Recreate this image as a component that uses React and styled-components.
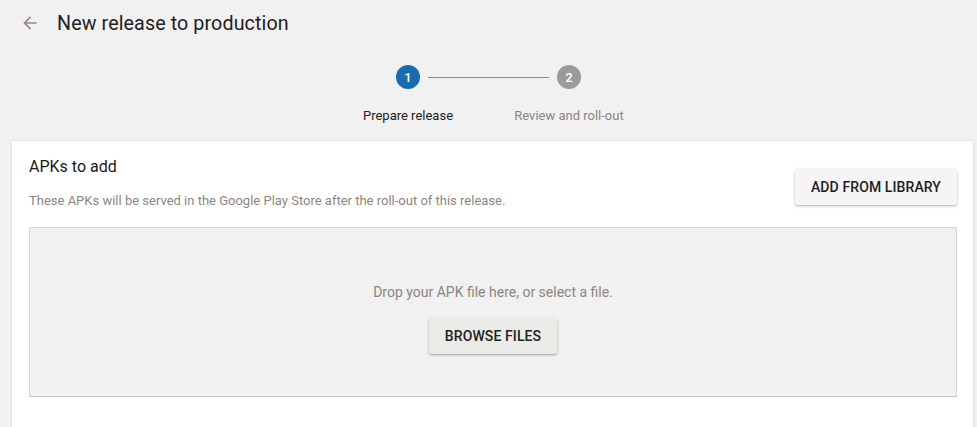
import React from "react";
import styled, { createGlobalStyle } from "styled-components";

const Global = createGlobalStyle`
  html, body { margin: 0; padding: 0; background: #f1f1f1; }
  body { font-family: Roboto, "Noto Sans", Arial, sans-serif; overflow: hidden; }
  * { box-sizing: border-box; }
`;

const Page = styled.div`
  width: 977px;
  height: 427px;
  background: #f1f1f1;
  display: flex;
  flex-direction: column;
`;

const Header = styled.div`
  display: flex;
  align-items: center;
  height: 46px;
  padding-left: 19px;
  gap: 16px;
`;

const BackButton = styled.button`
  width: 22px;
  height: 22px;
  border: none;
  background: none;
  padding: 0;
  display: flex;
  align-items: center;
  justify-content: center;
  cursor: pointer;
`;

const Title = styled.h1`
  margin: 0;
  font-size: 19.7px;
  font-weight: 400;
  color: #212121;
  letter-spacing: 0.1px;
`;

const Stepper = styled.div`
  display: flex;
  justify-content: center;
  padding-top: 19px;
`;

const Step = styled.div`
  width: 161px;
  display: flex;
  flex-direction: column;
  align-items: center;
  position: relative;
`;

const Circle = styled.div`
  width: 24px;
  height: 24px;
  border-radius: 50%;
  background: ${(p) => (p.$active ? "#1a6bb0" : "#9b9b9b")};
  color: #fff;
  font-size: 13px;
  font-weight: 500;
  display: flex;
  align-items: center;
  justify-content: center;
  z-index: 1;
`;

const Connector = styled.div`
  position: absolute;
  top: 12px;
  left: calc(50% + 20px);
  width: 121px;
  height: 1px;
  background: #8a8a8a;
`;

const StepLabel = styled.div`
  margin-top: 19px;
  font-size: 13px;
  color: ${(p) => (p.$active ? "#212121" : "#8d8580")};
  white-space: nowrap;
`;

const Card = styled.div`
  margin: 18px 4px 0 12px;
  flex: 1;
  background: #fff;
  box-shadow: 0 0 1px rgba(0, 0, 0, 0.2), 0 1px 2px rgba(0, 0, 0, 0.08);
  padding: 16px 16px 0 17px;
  display: flex;
  flex-direction: column;
`;

const CardTop = styled.div`
  display: flex;
  justify-content: space-between;
  align-items: flex-start;
`;

const CardText = styled.div`
  display: flex;
  flex-direction: column;
`;

const CardTitle = styled.h2`
  margin: 0;
  font-size: 16px;
  font-weight: 400;
  color: #1a1a1a;
  line-height: 20px;
`;

const CardSub = styled.p`
  margin: 16px 0 0;
  font-size: 13px;
  color: #8d8580;
  line-height: 16px;
`;

const RaisedButton = styled.button`
  font-family: Roboto, "Noto Sans", Arial, sans-serif;
  font-size: 14px;
  font-weight: 500;
  color: #212121;
  background: ${(p) => (p.$onGrey ? "#ebebe7" : "#f5f5f5")};
  border: none;
  border-radius: 2px;
  height: 36px;
  padding: 0 16px;
  margin-top: ${(p) => p.$mt || 0}px;
  box-shadow: 0 1px 3px rgba(0, 0, 0, 0.25), 0 1px 1px rgba(0, 0, 0, 0.1);
  cursor: pointer;
  letter-spacing: 0.1px;
`;

const DropZone = styled.div`
  margin-top: 18px;
  height: 170px;
  background: #f1f1f1;
  border: 1px solid #d4d4d4;
  border-bottom-color: #c8c8c0;
  display: flex;
  flex-direction: column;
  align-items: center;
  padding-top: 55px;
`;

const DropText = styled.div`
  font-size: 14px;
  color: #8d8580;
  line-height: 18px;
`;

const BackArrow = () => (
  <svg width="20" height="20" viewBox="0 0 24 24">
    <path d="M20 11H7.83l5.59-5.59L12 4l-8 8 8 8 1.41-1.41L7.83 13H20v-2z" fill="#9b8a84" />
  </svg>
);

export default function App() {
  return (
    <>
      <Global />
      <Page>
        <Header>
          <BackButton aria-label="Back">
            <BackArrow />
          </BackButton>
          <Title>New release to production</Title>
        </Header>
        <Stepper>
          <Step>
            <Circle $active>1</Circle>
            <Connector />
            <StepLabel $active>Prepare release</StepLabel>
          </Step>
          <Step>
            <Circle>2</Circle>
            <StepLabel>Review and roll-out</StepLabel>
          </Step>
        </Stepper>
        <Card>
          <CardTop>
            <CardText>
              <CardTitle>APKs to add</CardTitle>
              <CardSub>
                These APKs will be served in the Google Play Store after the roll-out of this release.
              </CardSub>
            </CardText>
            <RaisedButton $mt={12}>ADD FROM LIBRARY</RaisedButton>
          </CardTop>
          <DropZone>
            <DropText>Drop your APK file here, or select a file.</DropText>
            <RaisedButton $onGrey $mt={17}>BROWSE FILES</RaisedButton>
          </DropZone>
        </Card>
      </Page>
    </>
  );
}
